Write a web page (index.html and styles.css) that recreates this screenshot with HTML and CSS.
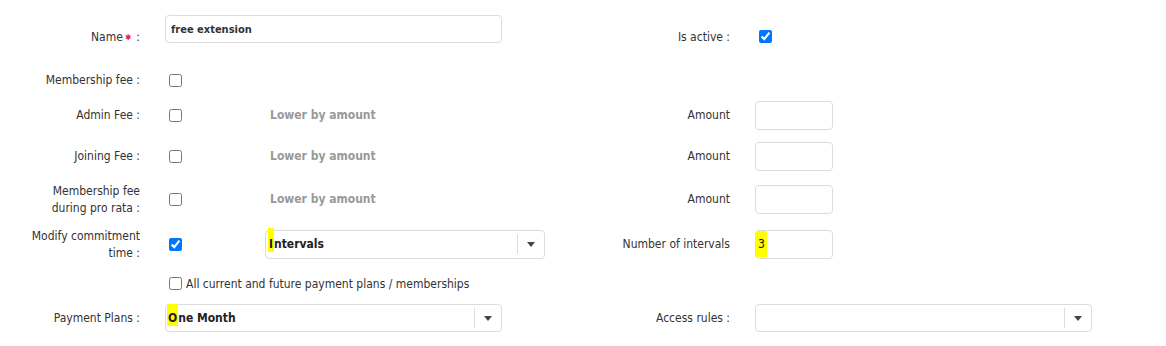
FILE: index.html
```html
<!DOCTYPE html>
<html lang="en">
<head>
    <meta charset="UTF-8">
    <title>Extension</title>
    <link rel="stylesheet" href="styles.css">
</head>
<body>
    <form class="ext-form">
        <!-- name / active -->
        <div class="row row-name">
            <div class="half-left">
                <label class="lbl">Name<span class="req">&#10033;</span> :</label>
                <div class="field">
                    <input class="text-input name-input" type="text" value="free extension">
                </div>
            </div>
            <div class="half-right">
                <label class="lbl">Is active :</label>
                <div class="field">
                    <input type="checkbox" checked>
                </div>
            </div>
        </div>

        <div class="row row-membership">
            <div class="half-left">
                <label class="lbl">Membership fee :</label>
                <div class="field">
                    <input type="checkbox">
                </div>
            </div>
        </div>

        <div class="row row-admin">
            <div class="half-left">
                <label class="lbl">Admin Fee :</label>
                <div class="field">
                    <span class="chk-cell"><input type="checkbox"></span>
                    <span class="lower">Lower by amount</span>
                </div>
            </div>
            <div class="half-right">
                <label class="lbl">Amount</label>
                <div class="field">
                    <input class="text-input amount-input" type="text">
                </div>
            </div>
        </div>

        <div class="row row-joining">
            <div class="half-left">
                <label class="lbl">Joining Fee :</label>
                <div class="field">
                    <span class="chk-cell"><input type="checkbox"></span>
                    <span class="lower">Lower by amount</span>
                </div>
            </div>
            <div class="half-right">
                <label class="lbl">Amount</label>
                <div class="field">
                    <input class="text-input amount-input" type="text">
                </div>
            </div>
        </div>

        <div class="row row-prorata">
            <div class="half-left">
                <label class="lbl">Membership fee<br>during pro rata :</label>
                <div class="field">
                    <span class="chk-cell"><input type="checkbox"></span>
                    <span class="lower">Lower by amount</span>
                </div>
            </div>
            <div class="half-right">
                <label class="lbl">Amount</label>
                <div class="field">
                    <input class="text-input amount-input" type="text">
                </div>
            </div>
        </div>

        <div class="row row-commit">
            <div class="half-left">
                <label class="lbl">Modify commitment<br>time :</label>
                <div class="field">
                    <span class="chk-cell"><input type="checkbox" checked></span>
                    <div class="select select-intervals">
                        <span class="select-value"><span class="mark mark-tall">I</span>ntervals</span>
                        <span class="select-arrow"></span>
                    </div>
                </div>
            </div>
            <div class="half-right">
                <label class="lbl">Number of intervals</label>
                <div class="field">
                    <div class="text-input amount-input fake-input"><span class="mark mark-num">3</span></div>
                </div>
            </div>
        </div>

        <div class="row row-all">
            <div class="half-left">
                <span class="lbl"></span>
                <label class="field all-plans">
                    <input type="checkbox">All current and future payment plans / memberships
                </label>
            </div>
        </div>

        <div class="row row-plans">
            <div class="half-left">
                <label class="lbl">Payment Plans :</label>
                <div class="field">
                    <div class="select select-wide">
                        <span class="select-value"><span class="mark mark-one">O</span>ne Month</span>
                        <span class="select-arrow"></span>
                    </div>
                </div>
            </div>
            <div class="half-right">
                <label class="lbl">Access rules :</label>
                <div class="field">
                    <div class="select select-wide">
                        <span class="select-value"></span>
                        <span class="select-arrow"></span>
                    </div>
                </div>
            </div>
        </div>
    </form>
</body>
</html>
```

FILE: styles.css
```css
body {
    margin: 0;
    background: #fff;
    font-family: 'DejaVu Sans Condensed', 'DejaVu Sans', sans-serif;
    font-size: 12px;
    color: #333;
}

.ext-form {
    display: flex;
    flex-direction: column;
}

.row {
    display: flex;
    align-items: center;
    height: 30px;
}

.half-left {
    display: flex;
    align-items: center;
    width: 605px;
    height: 100%;
}

.half-right {
    display: flex;
    align-items: center;
    height: 100%;
}

.lbl {
    width: 140px;
    flex-shrink: 0;
    text-align: right;
    line-height: 17px;
    padding-top: 1px;
}

.half-right .lbl {
    width: 125px;
}

.field {
    display: flex;
    align-items: center;
    margin-left: 25px;
}

.req {
    color: #e0202a;
    font-size: 8px;
    margin: 0 2px 0 2px;
    vertical-align: 1px;
}

input[type="checkbox"] {
    width: 13px;
    height: 13px;
    margin: 0 0 0 4px;
}

/* first row: input sits higher than the labels */
.row-name {
    height: 49px;
    align-items: flex-start;
}

.row-name .half-left,
.row-name .half-right {
    align-items: flex-start;
}

.row-name .lbl {
    margin-top: 28px;
}

.row-name .half-left .field {
    margin-top: 15px;
}

.row-name .half-right .field {
    margin-top: 30px;
}

.row-membership { margin-top: 16px; }
.row-admin { margin-top: 5px; }
.row-joining { margin-top: 11px; }
.row-prorata { margin-top: 13px; }
.row-commit { margin-top: 15px; }
.row-all { margin-top: 10px; }
.row-plans { margin-top: 4px; }

.text-input {
    box-sizing: border-box;
    height: 28px;
    border: 1px solid #dcdcdc;
    border-radius: 4px;
    padding: 0 5px;
    font-family: inherit;
    font-size: 12px;
    color: #333;
    outline: none;
}

.name-input {
    width: 337px;
    font-size: 11px;
    font-weight: bold;
}

.amount-input {
    width: 78px;
    height: 29px;
}

.fake-input {
    display: flex;
    align-items: center;
    padding: 0;
    color: #111;
}

.chk-cell {
    display: flex;
    align-items: center;
    width: 100px;
}

.lower {
    margin-left: 5px;
    font-weight: bold;
    color: #999;
}

.select {
    box-sizing: border-box;
    display: flex;
    align-items: center;
    height: 29px;
    border: 1px solid #dcdcdc;
    border-radius: 4px;
    font-weight: bold;
    color: #222;
}

.select-intervals { width: 280px; }
.select-wide { width: 337px; height: 28px; }

.select-value {
    flex: 1;
    padding-left: 2px;
}

.select-arrow {
    width: 26px;
    height: 20px;
    border-left: 1px solid #ddd;
    display: flex;
    align-items: center;
    justify-content: center;
}

.select-arrow::after {
    content: "";
    border-left: 4px solid transparent;
    border-right: 4px solid transparent;
    border-top: 5px solid #444;
}

/* yellow marker highlights drawn over the values */
.mark {
    background: #ffff00;
    display: inline-block;
    padding: 0 1px;
}

.mark-tall {
    padding-top: 8px;
    margin-top: -8px;
    line-height: 16px;
}

.mark-one {
    padding-top: 6px;
    margin-top: -6px;
    margin-left: -1px;
    line-height: 16px;
}

.mark-num {
    line-height: 26px;
    padding: 0 2px;
    font-weight: normal;
}

.all-plans {
    margin-left: 25px;
    gap: 4px;
}

.all-plans input[type="checkbox"] {
    margin-top: -2px;
}
```
